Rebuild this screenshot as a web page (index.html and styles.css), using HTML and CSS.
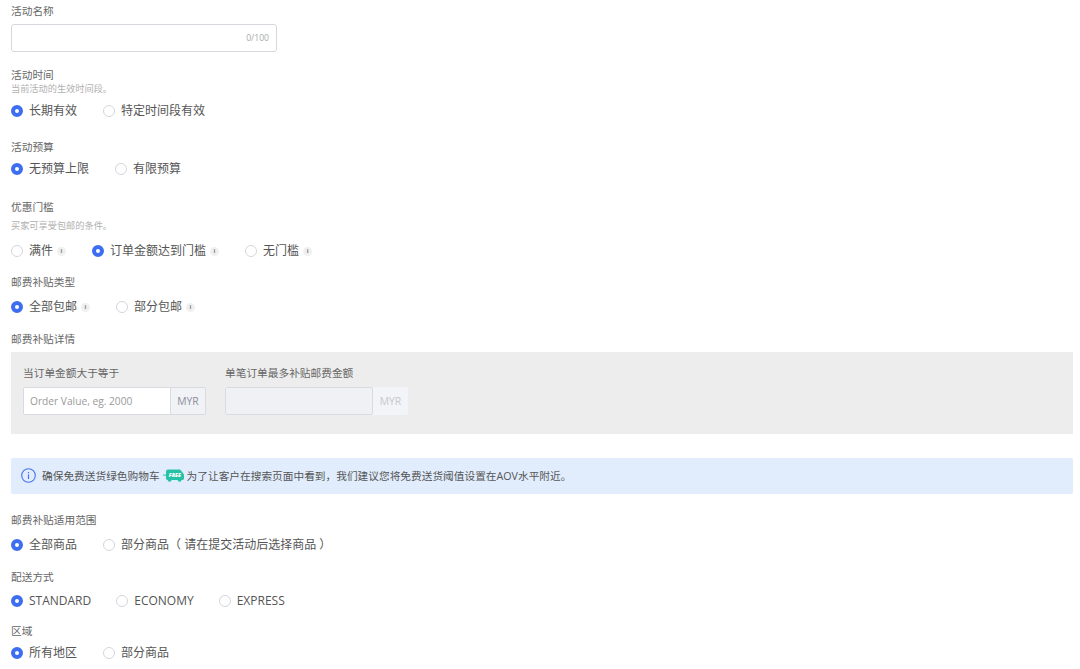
FILE: index.html
```html
<!DOCTYPE html>
<html lang="zh">
<head>
<meta charset="utf-8">
<title>活动设置</title>
<link rel="stylesheet" href="styles.css">
</head>
<body>
<form class="page">
  <div class="field first">
    <div class="label">活动名称</div>
    <div class="name-input"><span class="count">0/100</span></div>
  </div>

  <div class="field gap-16">
    <div class="label">活动时间</div>
    <div class="hint">当前活动的生效时间段。</div>
    <div class="radios after-short-hint">
      <span class="radio on"><i class="dot"></i>长期有效</span>
      <span class="radio"><i class="dot"></i>特定时间段有效</span>
    </div>
  </div>

  <div class="field gap-20">
    <div class="label">活动预算</div>
    <div class="radios">
      <span class="radio on"><i class="dot"></i>无预算上限</span>
      <span class="radio"><i class="dot"></i>有限预算</span>
    </div>
  </div>

  <div class="field gap-22">
    <div class="label">优惠门槛</div>
    <div class="hint hint-gap">买家可享受包邮的条件。</div>
    <div class="radios after-hint">
      <span class="radio"><i class="dot"></i>满件<b class="tip">i</b></span>
      <span class="radio on"><i class="dot"></i>订单金额达到门槛<b class="tip">i</b></span>
      <span class="radio"><i class="dot"></i>无门槛<b class="tip">i</b></span>
    </div>
  </div>

  <div class="field gap-15">
    <div class="label">邮费补贴类型</div>
    <div class="radios top-9">
      <span class="radio on"><i class="dot"></i>全部包邮<b class="tip">i</b></span>
      <span class="radio"><i class="dot"></i>部分包邮<b class="tip">i</b></span>
    </div>
  </div>

  <div class="field gap-16">
    <div class="label">邮费补贴详情</div>
    <div class="panel">
      <div class="panel-col">
        <div class="panel-label">当订单金额大于等于</div>
        <div class="group">
          <span class="group-input">Order Value, eg. 2000</span>
          <span class="addon">MYR</span>
        </div>
      </div>
      <div class="panel-col">
        <div class="panel-label">单笔订单最多补贴邮费金额</div>
        <div class="group disabled">
          <span class="group-input"></span>
          <span class="addon">MYR</span>
        </div>
      </div>
    </div>
  </div>

  <div class="alert">
    <svg class="alert-icon" width="15" height="15" viewBox="0 0 15 15" aria-hidden="true">
      <circle cx="7.5" cy="7.5" r="6.8" fill="none" stroke="#4a72ee" stroke-width="1.1"/>
      <rect x="6.9" y="6.4" width="1.2" height="4.6" fill="#4a72ee"/>
      <rect x="6.9" y="4" width="1.2" height="1.3" fill="#4a72ee"/>
    </svg>
    <span>确保免费送货绿色购物车</span>
    <svg class="truck" width="21" height="13" viewBox="0 0 21 13" aria-hidden="true">
      <rect x="0" y="5.6" width="3" height="1" fill="#27c2a5"/>
      <path d="M3 2.4Q3 .4 5 .4H16.4Q17.4 .4 18 1.4L20.4 4.4Q21 5.2 21 6.4V9.6Q21 11 19.6 11H4.4Q3 11 3 9.6Z" fill="#27c2a5"/>
      <circle cx="6.6" cy="10.8" r="2" fill="#27c2a5"/>
      <circle cx="16.6" cy="10.8" r="2" fill="#27c2a5"/>
      <text x="11.8" y="7.8" class="truck-text">FREE</text>
    </svg>
    <span>为了让客户在搜索页面中看到，我们建议您将免费送货阈值设置在AOV水平附近。</span>
  </div>

  <div class="field gap-19">
    <div class="label">邮费补贴适用范围</div>
    <div class="radios top-9">
      <span class="radio on"><i class="dot"></i>全部商品</span>
      <span class="radio"><i class="dot"></i>部分商品（ 请在提交活动后选择商品 ）</span>
    </div>
  </div>

  <div class="field gap-16">
    <div class="label">配送方式</div>
    <div class="radios top-8 latin">
      <span class="radio on"><i class="dot"></i>STANDARD</span>
      <span class="radio"><i class="dot"></i>ECONOMY</span>
      <span class="radio"><i class="dot"></i>EXPRESS</span>
    </div>
  </div>

  <div class="field gap-14">
    <div class="label">区域</div>
    <div class="radios">
      <span class="radio on"><i class="dot"></i>所有地区</span>
      <span class="radio"><i class="dot"></i>部分商品</span>
    </div>
  </div>
</form>
</body>
</html>
```

FILE: styles.css
```css
* {
  box-sizing: border-box;
}

html,
body {
  margin: 0;
  height: 100%;
  overflow: hidden;
  background: #fff;
}

body {
  font-family: "Open Sans", "Noto Sans CJK SC", sans-serif;
  color: #555;
}

.page {
  padding: 4px 7px 0 11px;
}

.gap-14 { margin-top: 14px; }
.gap-15 { margin-top: 15px; }
.gap-16 { margin-top: 16px; }
.gap-19 { margin-top: 19px; }
.gap-20 { margin-top: 20px; }
.gap-22 { margin-top: 22px; }

.label {
  font-size: 10.7px;
  line-height: 14px;
  height: 14px;
  color: #666;
}

.hint {
  font-size: 9.2px;
  line-height: 12px;
  margin-top: 1px;
  color: #b0b0b0;
}

.hint-gap {
  margin-top: 6px;
}

.name-input {
  width: 266px;
  height: 28px;
  margin-top: 6px;
  padding-right: 7px;
  border: 1px solid #d6d8de;
  border-radius: 3px;
  display: flex;
  align-items: center;
  justify-content: flex-end;
}

.count {
  font-size: 8.6px;
  color: #a9a9a9;
}

.radios {
  display: flex;
  gap: 26px;
  margin-top: 6px;
  height: 18px;
}

.radios.after-short-hint {
  margin-top: 7px;
}

.radios.after-hint {
  margin-top: 10px;
}

.radios.top-8 {
  margin-top: 8px;
}

.radios.top-9 {
  margin-top: 9px;
}

.radios.latin {
  gap: 25px;
}

.radio {
  display: flex;
  align-items: center;
  font-size: 12px;
  line-height: 18px;
  color: #555;
  white-space: nowrap;
}

.dot {
  width: 12px;
  height: 12px;
  margin-right: 6px;
  border: 1px solid #d4d6dc;
  border-radius: 50%;
  background: #fff;
  flex: none;
}

.on .dot {
  border: 4px solid #3d6df0;
}

.tip {
  width: 9px;
  height: 9px;
  margin-left: 4px;
  border-radius: 50%;
  background: #f0f0f0;
  color: #777;
  font-size: 6px;
  font-weight: 700;
  line-height: 9px;
  text-align: center;
  flex: none;
}

.panel {
  display: flex;
  gap: 19px;
  height: 82px;
  margin-top: 6px;
  padding: 14px 12px 0;
  background: #ededed;
}

.panel-label {
  font-size: 10.7px;
  line-height: 14px;
  color: #666;
}

.group {
  display: flex;
  width: 183px;
  height: 28px;
  margin-top: 7px;
  border: 1px solid #d9dbe1;
  border-radius: 2px;
  overflow: hidden;
}

.group-input {
  flex: 1;
  padding-left: 6px;
  background: #fff;
  font-size: 10.2px;
  line-height: 26px;
  color: #9a9a9a;
}

.addon {
  width: 35px;
  border-left: 1px solid #d9dbe1;
  background: #f1f2f6;
  font-size: 10.4px;
  line-height: 26px;
  text-align: center;
  color: #8b8f9c;
}

.group.disabled {
  width: 183px;
  border: 0;
}

.group.disabled .group-input {
  flex: none;
  width: 148px;
  border: 1px solid #d9dbe1;
  border-radius: 2px;
  background: #f0f1f4;
}

.group.disabled .addon {
  width: 35px;
  border: 0;
  background: #f3f4f7;
  line-height: 28px;
  color: #c6c8d0;
}

.alert {
  display: flex;
  align-items: center;
  height: 36px;
  margin-top: 24px;
  padding: 0 0 1px 10px;
  border-radius: 2px;
  background: #e1edfd;
  font-size: 10.7px;
  color: #555;
}

.alert-icon {
  margin-right: 6px;
  flex: none;
}

.truck {
  margin: 0 3px;
  flex: none;
}

.truck-text {
  fill: #fff;
  font-family: "Open Sans", sans-serif;
  font-size: 5.2px;
  font-weight: 800;
  font-style: italic;
  text-anchor: middle;
}
```
